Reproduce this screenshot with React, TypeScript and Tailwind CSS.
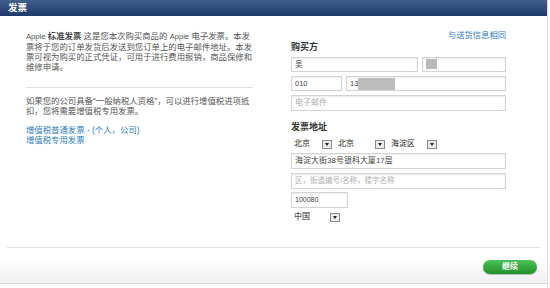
import React from "react";

const font = { fontFamily: '"Liberation Sans", "Noto Sans CJK SC", sans-serif' };

type FieldProps = { className?: string; children?: React.ReactNode };

const Field = ({ className = "", children }: FieldProps) => (
  <div
    className={`flex h-[15px] items-center border border-[#d4d4d4] bg-white px-[3px] text-[7.5px] text-[#444] shadow-[inset_0_1px_2px_rgba(0,0,0,0.08)] ${className}`}
  >
    {children}
  </div>
);

const Select = ({ label, className = "" }: { label: string; className?: string }) => (
  <div className={`flex h-[10px] items-center justify-between bg-white pl-[3px] text-[8px] leading-none text-[#222] ${className}`}>
    <span>{label}</span>
    <span className="flex h-[9px] w-[10px] items-center justify-center border border-[#8a8a8a] bg-[#ececec]">
      <span className="h-0 w-0 border-x-[2.5px] border-t-[3px] border-x-transparent border-t-[#222]" />
    </span>
  </div>
);

const Line = ({ children }: { children: React.ReactNode }) => (
  <span className="block whitespace-nowrap">{children}</span>
);

export default function App() {
  return (
    <div className="h-[288px] w-[550px] overflow-hidden bg-white" style={font}>
      <div className="flex h-full w-[548px] flex-col border-r border-[#dcdcdc]">
        <div className="h-[16px] shrink-0 bg-gradient-to-b from-[#425f8f] to-[#1d3a6b] px-[8px] text-[9.5px] font-bold leading-[16px] text-white">
          发票
        </div>

        <div className="flex h-[231px] shrink-0">
          {/* left column */}
          <div className="ml-[26px] w-[227px] pt-[15px] text-[8.4px] leading-[10px] text-[#555]">
            <p>
              <Line>
                <span className="text-[7.6px]">Apple</span> <b className="text-[#444]">标准发票</b> 这是您本次购买商品的{" "}
                <span className="text-[7.6px]">Apple</span> 电子发票。本发
              </Line>
              <Line>票将于您的订单发货后发送到您订单上的电子邮件地址。本发</Line>
              <Line>票可视为购买的正式凭证，可用于进行费用报销，商品保修和</Line>
              <Line>维修申请。</Line>
            </p>
            <div className="mt-[15px] border-t border-[#e0e0e0]" />
            <p className="mt-[8px]">
              <Line>如果您的公司具备“一般纳税人资格”，可以进行增值税进项抵</Line>
              <Line>扣，您将需要增值税专用发票。</Line>
            </p>
            <div className="mt-[9px] text-[#2c7cc4]">
              <p>增值税普通发票 - (个人，公司)</p>
              <p>增值税专用发票</p>
            </div>
          </div>

          {/* right column */}
          <div className="ml-[38px] w-[215px] pt-[14px]">
            <p className="text-right text-[8.3px] leading-[10px] text-[#2c7cc4]">与送货信息相同</p>
            <p className="mt-[2px] text-[9px] font-bold leading-[10px] text-[#333]">购买方</p>
            <div className="mt-[5px] flex gap-[4px]">
              <Field className="w-[127px]">吴</Field>
              <Field className="w-[84px] items-start pt-px">
                <span className="h-[10px] w-[11px] bg-[#b9b9b9]" />
              </Field>
            </div>
            <div className="mt-[4px] flex gap-[4px]">
              <Field className="w-[51px]">010</Field>
              <Field className="w-[160px] items-start pt-px">
                <span className="leading-[12px]">13</span>
                <span className="h-[12px] w-[37px] bg-[#bdbdbd]" />
              </Field>
            </div>
            <Field className="mt-[4px] h-[16px] w-[215px] text-[8px] text-[#aaa]">电子邮件</Field>

            <p className="mt-[11px] text-[9px] font-bold leading-[10px] text-[#333]">发票地址</p>
            <div className="mt-[7px] flex gap-[3px]">
              <Select label="北京" className="w-[41px]" />
              <Select label="北京" className="w-[50px]" />
              <Select label="海淀区" className="w-[49px]" />
            </div>
            <Field className="mt-[4px] h-[16px] w-[215px] text-[8px] text-[#333]">海淀大街38号银科大厦17层</Field>
            <Field className="mt-[4px] h-[16px] w-[215px] text-[7.5px] text-[#b0b0b0]">区，街道编号/名称，楼宇名称</Field>
            <Field className="mt-[3px] h-[16px] w-[57px] text-[7px]">100080</Field>
            <Select label="中国" className="mt-[4px] w-[49px]" />
          </div>
        </div>

        <div className="mx-[7px] shrink-0 border-t border-[#e2e2e2]" />

        <div className="flex h-[36px] shrink-0 items-start justify-end border-b border-[#d8d8d8] bg-gradient-to-b from-white from-30% to-[#efefef] pr-[10px] pt-[12px]">
          <button className="h-[14px] w-[54px] rounded-full bg-gradient-to-b from-[#4cc256] to-[#1d9129] text-[8px] font-bold leading-[14px] text-white shadow-[0_1px_1px_rgba(0,0,0,0.25)]">
            继续
          </button>
        </div>
      </div>
    </div>
  );
}
